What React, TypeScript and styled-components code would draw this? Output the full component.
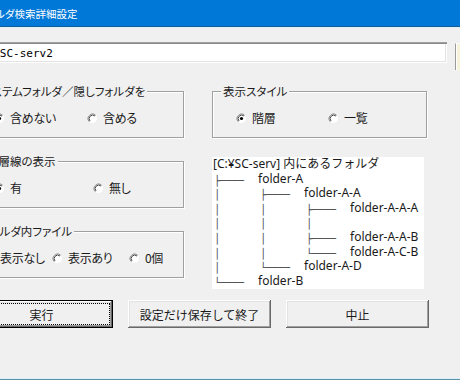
import React from "react";
import styled, { createGlobalStyle } from "styled-components";

const JP = `"Noto Sans CJK JP", sans-serif`;
const LATIN = `"Noto Sans", "Noto Sans CJK JP", sans-serif`;

const Global = createGlobalStyle`
  html, body { margin: 0; padding: 0; background: #f0f0f0; overflow: hidden; }
  body { width: 460px; height: 380px; }
  #root { width: 460px; height: 380px; overflow: hidden; }
  * { box-sizing: border-box; }
`;

const Window = styled.div`
  width: 560px;
  height: 380px;
  margin-left: -40px;
  background: #f0f0f0;
  display: flex;
  flex-direction: column;
  font-family: ${JP};
  color: #000;
  box-shadow: inset 0 -1px 0 #5b93a5, inset 0 -2px 0 #dcf0f8;
`;

const TitleBar = styled.div`
  height: 27px;
  flex-shrink: 0;
  background: #0078d7;
  border-bottom: 1px solid #1b5c96;
  box-shadow: 0 1px 0 #d9f1fb;
  margin-bottom: 1px;
  display: flex;
  align-items: center;
  padding: 1px 0 0 18px;
  color: #fff;
  font-size: 10.5px;
  font-feature-settings: "palt";
`;

const Body = styled.div`
  display: flex;
  flex-direction: column;
  padding: 14px 0 0 10px;
`;

const TopRow = styled.div`
  display: flex;
  align-items: flex-start;
  gap: 8px;
  height: 28px;
  margin-bottom: 21px;
`;

const PathInput = styled.input`
  width: 477px;
  height: 21px;
  border: none;
  outline: none;
  background: #fff;
  padding: 1px 0 0 10px;
  font-family: "DejaVu Sans Mono", monospace;
  font-size: 11px;
  color: #000;
  box-shadow: inset 1px 1px 0 #a0a0a0, inset 2px 2px 0 #8a8a8a,
    inset -1px -1px 0 #fff, inset -2px -2px 0 #e3e3e3;
`;

const BrowseButton = styled.div`
  width: 30px;
  height: 27px;
  margin-top: 1px;
  background: #f7f2da;
  border-left: 1px solid #9a9a9a;
  border-top: 1px solid #fff;
  box-shadow: inset 1px 0 0 #fff;
`;

const Columns = styled.div`
  display: grid;
  grid-template-columns: 214px 215px;
  column-gap: 28px;
  align-items: start;
`;

const Column = styled.div<{ $gap: number }>`
  display: flex;
  flex-direction: column;
  gap: ${(p) => p.$gap}px;
`;

const Group = styled.div`
  display: flex;
  flex-direction: column;
  border: 1px solid #a0a0a0;
  box-shadow: inset 1px 1px 0 #fff, 1px 1px 0 #fff;
  padding-bottom: 11px;
`;

const Legend = styled.div<{ $inset?: number }>`
  align-self: flex-start;
  margin: -8px 0 0 ${(p) => p.$inset ?? 8}px;
  padding: 0 2px;
  height: 14px;
  line-height: 14px;
  background: #f0f0f0;
  font-size: 11.5px;
  color: #1a1a1a;
  font-feature-settings: "palt";
  white-space: nowrap;
`;

const RadioRow = styled.div<{ $pad: number }>`
  display: flex;
  align-items: center;
  height: 16px;
  margin-top: 12px;
  padding-left: ${(p) => p.$pad}px;
`;

const RadioItem = styled.label<{ $w?: number }>`
  display: inline-flex;
  align-items: center;
  gap: 5px;
  flex-shrink: 0;
  width: ${(p) => (p.$w ? `${p.$w}px` : "auto")};
  font-size: 12px;
  line-height: 16px;
  letter-spacing: -0.3px;
  color: #1a1a1a;
  font-feature-settings: "palt";
  white-space: nowrap;
  svg { flex-shrink: 0; }
`;

const RadioMark = ({ checked }: { checked?: boolean }) => (
  <svg width="11" height="11" viewBox="0 0 11 11">
    <circle cx="5.5" cy="5.5" r="4.5" fill="#fff" />
    <path d="M2.32 8.68 A4.5 4.5 0 0 1 8.68 2.32" fill="none" stroke="#8a8a8a" strokeWidth="1" />
    <path d="M3.03 7.97 A3.5 3.5 0 0 1 7.97 3.03" fill="none" stroke="#444" strokeWidth="1" />
    {checked && <circle cx="5.5" cy="5.5" r="1.6" fill="#000" />}
  </svg>
);

const Radio = ({ label, checked, w }: { label: string; checked?: boolean; w?: number }) => (
  <RadioItem $w={w}>
    <RadioMark checked={checked} />
    <span>{label}</span>
  </RadioItem>
);

const TreeBox = styled.div`
  width: 212px;
  height: 132px;
  background: #fff;
  padding-left: 1px;
  font-family: ${LATIN};
  font-size: 12px;
  line-height: 14.6px;
  color: #1a1a1a;
  overflow: hidden;
`;

const TreeHeader = styled.div`
  height: 14.6px;
  white-space: nowrap;
`;

const TreeRow = styled.div`
  display: flex;
  height: 14.6px;
  padding-left: 1px;
  white-space: pre;
`;

const Glyphs = styled.span<{ $w: number }>`
  width: ${(p) => p.$w}px;
  flex-shrink: 0;
  font-family: "DejaVu Sans Mono", monospace;
  font-size: 10px;
  line-height: 14.6px;
  padding-top: 2px;
  color: #444;
`;

const ButtonRow = styled.div`
  display: flex;
  gap: 15px;
  margin-top: 11px;
`;

const Button = styled.button<{ $default?: boolean }>`
  width: 143px;
  height: 28px;
  padding: 0;
  background: #f0f0f0;
  font-family: ${JP};
  font-size: 12px;
  color: #1a1a1a;
  border: ${(p) => (p.$default ? "1px solid #000" : "none")};
  box-shadow: inset -1px -1px 0 #696969, inset 1px 1px 0 #fff,
    inset -2px -2px 0 #a0a0a0, inset 2px 2px 0 #e3e3e3;
  outline: ${(p) => (p.$default ? "1px dotted #000" : "none")};
  outline-offset: -4px;
`;

type Row = { bars: number; conn?: string; label?: string };

const tree: Row[] = [
  { bars: 0, conn: "├", label: "folder-A" },
  { bars: 1, conn: "├", label: "folder-A-A" },
  { bars: 2, conn: "├", label: "folder-A-A-A" },
  { bars: 3 },
  { bars: 2, conn: "├", label: "folder-A-A-B" },
  { bars: 2, conn: "└", label: "folder-A-C-B" },
  { bars: 1, conn: "└", label: "folder-A-D" },
  { bars: 0, conn: "└", label: "folder-B" },
];

export default function App() {
  return (
    <>
      <Global />
      <Window>
        <TitleBar>フォルダ検索詳細設定</TitleBar>
        <Body>
          <TopRow>
            <PathInput readOnly value="C:¥SC-serv2" />
            <BrowseButton />
          </TopRow>
          <Columns>
            <Column $gap={23}>
              <Group>
                <Legend>システムフォルダ／隠しフォルダを</Legend>
                <RadioRow $pad={23}>
                  <Radio label="含めない" checked w={93} />
                  <Radio label="含める" />
                </RadioRow>
              </Group>
              <Group>
                <Legend $inset={14}>階層線の表示</Legend>
                <RadioRow $pad={23}>
                  <Radio label="有" checked w={99} />
                  <Radio label="無し" />
                </RadioRow>
              </Group>
              <Group>
                <Legend>フォルダ内ファイル</Legend>
                <RadioRow $pad={13}>
                  <Radio label="表示なし" checked w={68} />
                  <Radio label="表示あり" w={77} />
                  <Radio label="0個" />
                </RadioRow>
              </Group>
            </Column>
            <Column $gap={19}>
              <Group>
                <Legend>表示スタイル</Legend>
                <RadioRow $pad={23}>
                  <Radio label="階層" checked w={92} />
                  <Radio label="一覧" />
                </RadioRow>
              </Group>
              <TreeBox>
                <TreeHeader>[C:¥SC-serv] 内にあるフォルダ</TreeHeader>
                {tree.map((r, i) => (
                  <TreeRow key={i}>
                    {Array.from({ length: r.bars }).map((_, j) => (
                      <Glyphs key={j} $w={46}>│</Glyphs>
                    ))}
                    {r.conn && <Glyphs $w={44}>{r.conn + "────"}</Glyphs>}
                    {r.label && <span>{r.label}</span>}
                  </TreeRow>
                ))}
              </TreeBox>
            </Column>
          </Columns>
          <ButtonRow>
            <Button $default>実行</Button>
            <Button>設定だけ保存して終了</Button>
            <Button>中止</Button>
          </ButtonRow>
        </Body>
      </Window>
    </>
  );
}
